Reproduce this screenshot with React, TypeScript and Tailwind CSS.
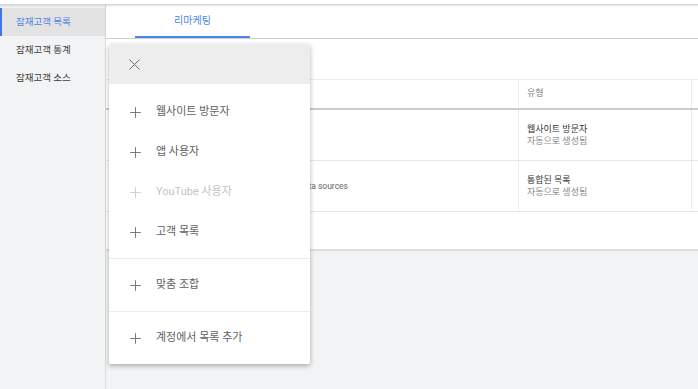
import { X, Plus } from 'lucide-react';

const font = { fontFamily: 'Roboto, "Noto Sans CJK KR", sans-serif' };

const sideItems = ['잠재고객 목록', '잠재고객 통계', '잠재고객 소스'];

function MenuItem({ label, disabled = false }: { label: string; disabled?: boolean }) {
  return (
    <div className={`h-[40px] flex items-center pl-[18px] ${disabled ? 'text-[#c4c4c4]' : 'text-[#5f5f5f]'}`}>
      <Plus size={17} strokeWidth={1.3} className={disabled ? 'text-[#cdcdcd]' : 'text-[#6f6f6f]'} />
      <span className="ml-[12px] text-[11px]">{label}</span>
    </div>
  );
}

export default function App() {
  return (
    <div className="relative w-[698px] h-[389px] overflow-hidden bg-[#f1f3f4] flex flex-col" style={font}>
      {/* top strip */}
      <div className="h-[5px] bg-white border-b border-[#d6d6d6] shadow-[0_1px_2px_rgba(0,0,0,0.12)] relative z-10" />

      <div className="flex flex-1">
        {/* sidebar */}
        <aside className="w-[106px] shrink-0 bg-[#f1f3f4] border-r border-[#dcdcdc] pt-[3px]">
          {sideItems.map((s, i) => (
            <div
              key={s}
              className={`h-[28px] flex items-center text-[9.5px] ${
                i === 0 ? 'bg-[#e3e3e3] text-[#4a86e8] border-l-2 border-[#3b78e7] pl-[14px]' : 'text-[#3c3c3c] pl-[16px]'
              }`}
            >
              {s}
            </div>
          ))}
        </aside>

        {/* main */}
        <main className="flex-1 flex flex-col">
          <div className="h-[34px] bg-white border-b border-[#cfcfcf] shadow-[0_1px_2px_rgba(0,0,0,0.1)] flex">
            <div className="ml-[29px] w-[115px] flex flex-col">
              <div className="flex-1 flex items-center justify-center text-[10px] text-[#4a86e8]">리마케팅</div>
              <div className="h-[2px] bg-[#4a86e8]" />
            </div>
          </div>

          <div className="bg-white h-[212px] border-b-2 border-[#dedede] flex flex-col">
            <div className="h-[40px]" />
            {/* table header */}
            <div className="flex h-[31px] border-t border-[#ececec] border-b-2 border-b-[#cbcbcb] text-[9px] text-[#7a7a7a]">
              <div className="w-[413px] border-r border-[#ececec]" />
              <div className="w-[173px] border-r border-[#ececec] flex items-center pl-[8px]">유형</div>
              <div className="flex-1" />
            </div>
            <div className="flex h-[51px] border-b border-[#e6e6e6]">
              <div className="w-[413px] border-r border-[#ececec]" />
              <div className="w-[173px] border-r border-[#ececec] flex flex-col justify-center pl-[8px] leading-[12px]">
                <span className="text-[9px] text-[#333]">웹사이트 방문자</span>
                <span className="text-[9px] text-[#8a8a8a]">자동으로 생성됨</span>
              </div>
              <div className="flex-1" />
            </div>
            <div className="flex h-[51px] border-b border-[#e6e6e6]">
              <div className="w-[413px] border-r border-[#ececec] flex items-center">
                <div className="w-[242px] overflow-hidden whitespace-nowrap text-right text-[8.5px] text-[#666]">
                  Users from all Google data sources
                </div>
              </div>
              <div className="w-[173px] border-r border-[#ececec] flex flex-col justify-center pl-[8px] leading-[12px]">
                <span className="text-[9px] text-[#333]">통합된 목록</span>
                <span className="text-[9px] text-[#8a8a8a]">자동으로 생성됨</span>
              </div>
              <div className="flex-1" />
            </div>
          </div>
        </main>
      </div>

      {/* dropdown menu */}
      <div className="absolute left-[109px] top-[44px] w-[201px] bg-white rounded-[2px] shadow-[0_2px_5px_rgba(0,0,0,0.3)] z-20">
        <div className="h-[40px] bg-[#ededed] flex items-center pl-[16px] rounded-t-[2px]">
          <X size={19} strokeWidth={1.2} className="text-[#6a6a6a]" />
        </div>
        <div className="pt-[8px] pb-[6px] border-b border-[#ececec]">
          <MenuItem label="웹사이트 방문자" />
          <MenuItem label="앱 사용자" />
          <MenuItem label="YouTube 사용자" disabled />
          <MenuItem label="고객 목록" />
        </div>
        <div className="py-[6px] border-b border-[#ececec]">
          <MenuItem label="맞춤 조합" />
        </div>
        <div className="py-[6px]">
          <MenuItem label="계정에서 목록 추가" />
        </div>
      </div>
    </div>
  );
}
